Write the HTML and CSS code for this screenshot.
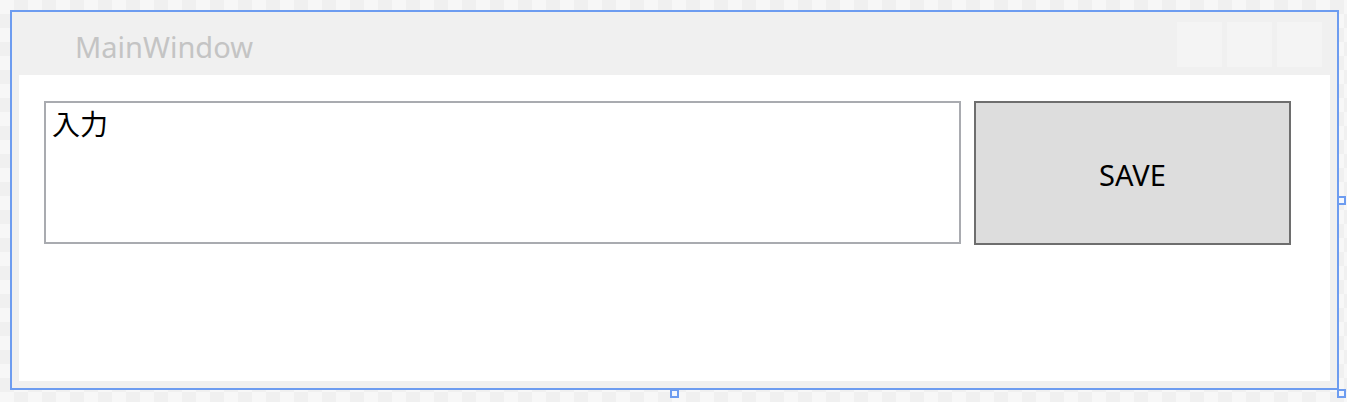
FILE: index.html
```html
<!DOCTYPE html>
<html lang="ja">
<head>
<meta charset="utf-8">
<title>MainWindow</title>
<link rel="stylesheet" href="styles.css">
</head>
<body>
<div class="stage">
  <div class="window">
    <div class="titlebar">
      <span class="title">MainWindow</span>
      <div class="caption-buttons">
        <span class="cap-btn"></span>
        <span class="cap-btn"></span>
        <span class="cap-btn"></span>
      </div>
    </div>
    <div class="client">
      <div class="textbox">入力</div>
      <div class="save-btn">SAVE</div>
    </div>
    <span class="handle handle-right"></span>
    <span class="handle handle-bottom"></span>
    <span class="handle handle-corner"></span>
  </div>
</div>
</body>
</html>
```

FILE: styles.css
```css
html, body {
  margin: 0;
  padding: 0;
}
body {
  width: 1347px;
  height: 402px;
  overflow: hidden;
  background-color: #f7f7f7;
  background-image:
    linear-gradient(45deg, #f0f0f0 25%, transparent 25%, transparent 75%, #f0f0f0 75%),
    linear-gradient(45deg, #f0f0f0 25%, transparent 25%, transparent 75%, #f0f0f0 75%);
  background-size: 28px 28px;
  background-position: 0 0, 14px 14px;
  font-family: "Noto Sans", "Open Sans", "Noto Sans CJK JP", sans-serif;
}
.stage {
  padding: 10px 0 0 10px;
}
.window {
  position: relative;
  box-sizing: border-box;
  width: 1329px;
  height: 380px;
  border: 2px solid #6d9cf0;
  background: #f0f0f0;
  display: flex;
  flex-direction: column;
}
.titlebar {
  height: 63px;
  display: flex;
  align-items: flex-start;
  justify-content: space-between;
}
.title {
  margin-left: 63px;
  margin-top: 17px;
  font-size: 29px;
  line-height: 36px;
  color: #c4c4c4;
}
.caption-buttons {
  display: flex;
  gap: 5px;
  margin-top: 10px;
  margin-right: 15px;
}
.cap-btn {
  width: 45px;
  height: 45px;
  background: #f4f4f4;
}
.client {
  flex: 1;
  margin: 0 7px 7px 7px;
  background: #ffffff;
  display: flex;
  align-items: flex-start;
  gap: 13px;
  padding: 26px 0 0 25px;
}
.textbox {
  box-sizing: border-box;
  width: 917px;
  height: 143px;
  border: 2px solid #a9abb0;
  padding: 2px 6px;
  font-family: "Noto Sans CJK JP", sans-serif;
  font-size: 28px;
  line-height: 36px;
  color: #000;
}
.save-btn {
  box-sizing: border-box;
  width: 317px;
  height: 144px;
  border: 2px solid #6e6e6e;
  background: #dddddd;
  display: flex;
  align-items: center;
  justify-content: center;
  padding-top: 2px;
  font-size: 29px;
  color: #000;
}
.handle {
  position: absolute;
  box-sizing: border-box;
  width: 9px;
  height: 9px;
  border: 2px solid #6d9cf0;
  background: #f4f7fd;
}
.handle-right {
  left: 1325px;
  top: 184px;
}
.handle-bottom {
  left: 658px;
  top: 377px;
}
.handle-corner {
  left: 1325px;
  top: 377px;
}
```
